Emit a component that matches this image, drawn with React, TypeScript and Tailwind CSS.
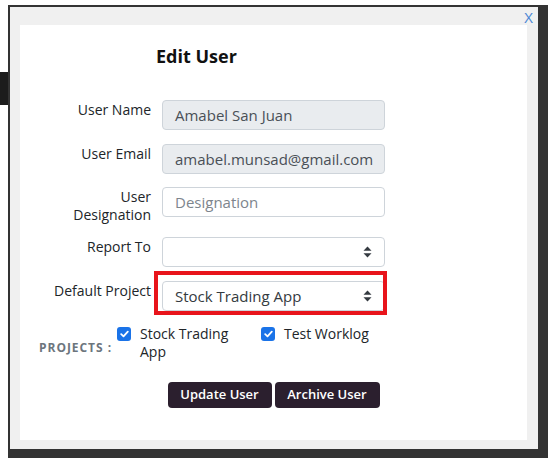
import React from 'react';

const font = { fontFamily: '"Open Sans", "Noto Sans", sans-serif' };

function SortArrows() {
  return (
    <svg width="9" height="12" viewBox="0 0 9 12" className="text-[#343a40]">
      <path d="M4.5 0.5 L8.5 4.8 H0.5 Z" fill="currentColor" />
      <path d="M4.5 11.5 L8.5 7.2 H0.5 Z" fill="currentColor" />
    </svg>
  );
}

function CheckBox() {
  return (
    <span className="mt-[2px] flex h-[14px] w-[14px] shrink-0 items-center justify-center rounded-[3px] bg-[#1a73e8]">
      <svg width="9" height="8" viewBox="0 0 9 8">
        <path d="M1.2 4.2 L3.5 6.3 L7.8 1.6" fill="none" stroke="white" strokeWidth="1.8" strokeLinecap="round" strokeLinejoin="round" />
      </svg>
    </span>
  );
}

function Row({ label, children }: { label: React.ReactNode; children: React.ReactNode }) {
  return (
    <div className="flex items-start">
      <div className="w-[131px] pt-[1px] text-right text-[14px] leading-[18px] text-[#212529]">{label}</div>
      <div className="ml-[11px] w-[223px]">{children}</div>
    </div>
  );
}

export default function App() {
  return (
    <div
      style={font}
      className="h-[458px] w-[548px] overflow-hidden bg-[linear-gradient(to_bottom,#ffffff_72px,#1c1c1c_72px,#1c1c1c_105px,#ffffff_105px)] pl-[8px] pt-[5px]"
    >
      <div className="flex h-[453px] w-[540px] flex-col border-b-[9px] border-l-2 border-r-[10px] border-t-2 border-[#333333] bg-[#f0f0f0]">
        <div className="flex h-[18px] justify-end pr-[5px]">
          <span className="pt-[1px] text-[15px] leading-[18px] text-[#4a86d4]">X</span>
        </div>

        <div className="ml-[10px] h-[415px] w-[507px] bg-white">
          <h2 className="ml-[136px] pt-[19px] text-[18px] font-bold leading-[24px] text-[#111]">Edit User</h2>

          <div className="mt-[32px] flex flex-col">
            <Row label="User Name">
              <div className="flex h-[30px] items-center rounded-[4px] border border-[#ced4da] bg-[#e9ecef] pl-[12px] text-[15px] text-[#495057]">
                Amabel San Juan
              </div>
            </Row>
            <div className="h-[14px]" />
            <Row label="User Email">
              <div className="flex h-[30px] items-center rounded-[4px] border border-[#ced4da] bg-[#e9ecef] pl-[12px] text-[15px] text-[#495057]">
                amabel.munsad@gmail.com
              </div>
            </Row>
            <div className="h-[13px]" />
            <div className="h-[37px]">
              <Row label={<>User<br />Designation</>}>
                <div className="flex h-[30px] items-center rounded-[4px] border border-[#ced4da] bg-white pl-[12px] text-[15px] text-[#7d858d]">
                  Designation
                </div>
              </Row>
            </div>
            <div className="h-[13px]" />
            <Row label="Report To">
              <div className="flex h-[30px] items-center justify-end rounded-[4px] border border-[#ced4da] bg-white pr-[12px]">
                <SortArrows />
              </div>
            </Row>
            <div className="h-[14px]" />
            <Row label="Default Project">
              <div className="relative">
                <div className="flex h-[30px] items-center justify-between rounded-[4px] border border-[#ced4da] bg-white pl-[12px] pr-[12px] text-[15px] text-[#343a40]">
                  Stock Trading App
                  <SortArrows />
                </div>
                <div className="pointer-events-none absolute -bottom-[4px] -left-[8px] -right-[2px] -top-[10px] border-[4px] border-[#e8141b]" />
              </div>
            </Row>
          </div>

          <div className="mt-[14px] flex items-start">
            <span className="ml-[19px] mt-[14px] w-[78px] text-[12px] font-bold leading-[18px] tracking-[0.08em] text-[#6c757d]">
              PROJECTS :
            </span>
            <div className="flex w-[144px] items-start">
              <CheckBox />
              <span className="ml-[9px] w-[100px] text-[14px] leading-[18px] text-[#212529]">Stock Trading App</span>
            </div>
            <div className="flex items-start">
              <CheckBox />
              <span className="ml-[9px] text-[14px] leading-[18px] text-[#212529]">Test Worklog</span>
            </div>
          </div>

          <div className="mt-[21px] flex justify-center gap-[3px]">
            <button className="h-[26px] w-[104px] rounded-[4px] bg-[#2b1f2e] text-[13px] font-semibold text-white">
              Update User
            </button>
            <button className="h-[26px] w-[105px] rounded-[4px] bg-[#2b1f2e] text-[13px] font-semibold text-white">
              Archive User
            </button>
          </div>
        </div>
      </div>
    </div>
  );
}
